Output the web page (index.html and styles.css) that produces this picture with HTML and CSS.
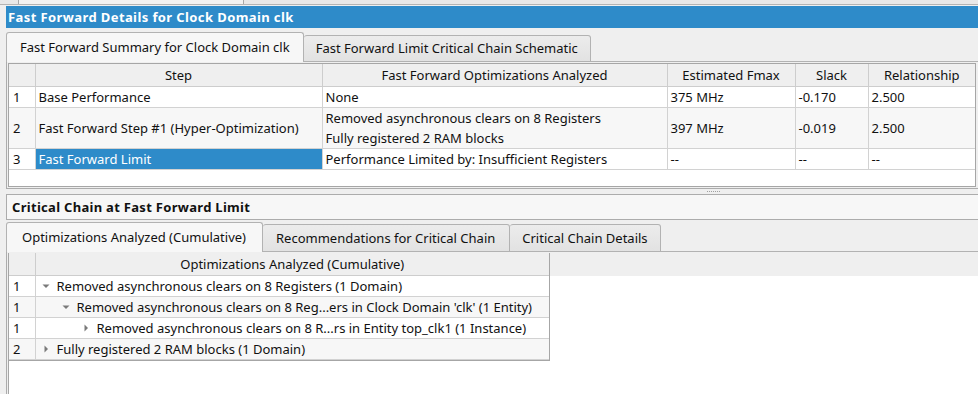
FILE: index.html
```html
<!DOCTYPE html>
<html lang="en">
<head>
    <meta charset="UTF-8">
    <title>Fast Forward Details</title>
    <link rel="stylesheet" href="styles.css">
</head>
<body>
<div class="top-strip"><div class="top-box"></div></div>

<div class="panel">
    <div class="title-bar">Fast Forward Details for Clock Domain clk</div>
    <div class="tabs tabs-first">
        <div class="tab active">Fast Forward Summary for Clock Domain clk</div>
        <div class="tab">Fast Forward Limit Critical Chain Schematic</div>
        <div class="tab-fill"></div>
    </div>
    <div class="pane">
        <div class="grid-frame summary">
            <table class="grid">
                <colgroup>
                    <col style="width:26px">
                    <col style="width:287px">
                    <col style="width:345px">
                    <col style="width:128px">
                    <col style="width:73px">
                    <col>
                </colgroup>
                <thead>
                <tr>
                    <th></th>
                    <th>Step</th>
                    <th>Fast Forward Optimizations Analyzed</th>
                    <th>Estimated Fmax</th>
                    <th>Slack</th>
                    <th>Relationship</th>
                </tr>
                </thead>
                <tbody>
                <tr>
                    <td class="num">1</td>
                    <td>Base Performance</td>
                    <td>None</td>
                    <td>375 MHz</td>
                    <td>-0.170</td>
                    <td>2.500</td>
                </tr>
                <tr class="alt tall">
                    <td class="num">2</td>
                    <td>Fast Forward Step #1 (Hyper-Optimization)</td>
                    <td>Removed asynchronous clears on 8 Registers<br>Fully registered 2 RAM blocks</td>
                    <td>397 MHz</td>
                    <td>-0.019</td>
                    <td>2.500</td>
                </tr>
                <tr>
                    <td class="num">3</td>
                    <td class="selected">Fast Forward Limit</td>
                    <td>Performance Limited by: Insufficient Registers</td>
                    <td>--</td>
                    <td>--</td>
                    <td>--</td>
                </tr>
                </tbody>
            </table>
        </div>
    </div>
</div>

<div class="splitter"><span class="grip"></span></div>

<div class="panel lower">
    <div class="title-bar plain">Critical Chain at Fast Forward Limit</div>
    <div class="tabs tabs-second">
        <div class="tab active wide">Optimizations Analyzed (Cumulative)</div>
        <div class="tab mid">Recommendations for Critical Chain</div>
        <div class="tab">Critical Chain Details</div>
        <div class="tab-fill"></div>
    </div>
    <div class="pane grow">
        <div class="tree-head-band">
            <div class="grid-frame tree">
                <table class="grid">
                    <colgroup>
                        <col style="width:26px">
                        <col>
                    </colgroup>
                    <thead>
                    <tr>
                        <th></th>
                        <th>Optimizations Analyzed (Cumulative)</th>
                    </tr>
                    </thead>
                    <tbody>
                    <tr>
                        <td class="num">1</td>
                        <td><div class="node lvl1"><svg class="arrow" viewBox="0 0 8 8"><polygon points="0.5,2.5 7.5,2.5 4,6"/></svg>Removed asynchronous clears on 8 Registers (1 Domain)</div></td>
                    </tr>
                    <tr class="alt">
                        <td class="num">1</td>
                        <td><div class="node lvl2"><svg class="arrow" viewBox="0 0 8 8"><polygon points="0.5,2.5 7.5,2.5 4,6"/></svg>Removed asynchronous clears on 8 Reg...ers in Clock Domain 'clk' (1 Entity)</div></td>
                    </tr>
                    <tr>
                        <td class="num">1</td>
                        <td><div class="node lvl3"><svg class="arrow" viewBox="0 0 8 8"><polygon points="2.5,0.5 6,4 2.5,7.5"/></svg>Removed asynchronous clears on 8 R...rs in Entity top_clk1 (1 Instance)</div></td>
                    </tr>
                    <tr class="alt">
                        <td class="num">2</td>
                        <td><div class="node lvl1"><svg class="arrow" viewBox="0 0 8 8"><polygon points="2.5,0.5 6,4 2.5,7.5"/></svg>Fully registered 2 RAM blocks (1 Domain)</div></td>
                    </tr>
                    </tbody>
                </table>
            </div>
        </div>
    </div>
</div>
</body>
</html>
```

FILE: styles.css
```css
html,
body {
    margin: 0;
    padding: 0;
    height: 100%;
    overflow: hidden;
}

body {
    background: #efefef;
    font: 13px "Noto Sans", "DejaVu Sans", sans-serif;
    color: #111111;
    display: flex;
    flex-direction: column;
}

.top-strip {
    height: 4px;
    border-bottom: 1px solid #b4b4b4;
    background: #e8e8e8;
    padding-left: 18px;
}
.top-box {
    width: 224px;
    height: 4px;
    border-left: 1px solid #a8a8a8;
    border-right: 1px solid #a8a8a8;
    background: #f2f2f2;
}

.panel {
    margin-left: 6px;
    margin-top: 1px;
    display: flex;
    flex-direction: column;
}
.panel.lower {
    margin-top: 0;
    flex: 1;
}

.title-bar {
    height: 22px;
    line-height: 22px;
    background: #2e8bc9;
    color: #ffffff;
    font-weight: 700;
    letter-spacing: 0.4px;
    padding-left: 2px;
    white-space: nowrap;
}
.title-bar.plain {
    height: 24px;
    line-height: 24px;
    background: #f7f7f7;
    color: #111111;
    border: 1px solid #acacac;
    border-right: none;
    letter-spacing: 0.3px;
    padding-left: 5px;
}

/* tab bars */
.tabs {
    display: flex;
    align-items: flex-end;
}
.tabs-first {
    height: 34px;
}
.tabs-second {
    height: 32px;
}
.tab {
    box-sizing: border-box;
    height: 27px;
    line-height: 25px;
    padding: 0 12px;
    background: linear-gradient(#ececec, #e2e2e2);
    border: 1px solid #b2b2b2;
    border-left: none;
    border-radius: 3px 3px 0 0;
    white-space: nowrap;
}
.tabs-second .tab {
    height: 28px;
    line-height: 26px;
}
.tab.active {
    height: 30px;
    line-height: 28px;
    background: #f7f7f7;
    border-left: 1px solid #b2b2b2;
    border-bottom: none;
    padding: 0 13px;
}
.tabs-second .tab.active {
    height: 30px;
}
.tab.wide {
    padding: 0 16px 0 15px;
}
.tab.mid {
    padding: 0 14px 0 13px;
}
.tab-fill {
    flex: 1;
    border-bottom: 1px solid #b2b2b2;
}

/* tab page */
.pane {
    border-left: 1px solid #acacac;
    border-bottom: 1px solid #acacac;
    padding: 1px 2px 1px 1px;
}
.pane.grow {
    flex: 1;
    border-bottom: none;
    padding: 1px 0 0 1px;
}

.grid-frame {
    background: #ffffff;
    border: 1px solid #a6a6a6;
}
.grid-frame.summary {
    height: 122px;
}

.tree-head-band {
    height: 100%;
    background: linear-gradient(#efefef 0, #efefef 23px, #ffffff 23px);
    border-left: 1px solid #a6a6a6;
}
.grid-frame.tree {
    width: 540px;
    border-left: none;
    border-top: none;
}

.grid {
    width: 100%;
    border-collapse: collapse;
    table-layout: fixed;
}
.grid th {
    height: 22px;
    padding: 0;
    background: #efefef;
    font-weight: 400;
    text-align: center;
    border-right: 1px solid #cdcdcd;
    border-bottom: 1px solid #cdcdcd;
    white-space: nowrap;
}
.grid th:last-child {
    border-right: none;
}
.grid td {
    height: 20px;
    padding: 0 3px;
    border-right: 1px solid #d2d2d2;
    border-bottom: 1px solid #d2d2d2;
    white-space: nowrap;
    line-height: 20px;
}
.grid td.num {
    padding-left: 4px;
}
.grid td:last-child {
    border-right: none;
}
.grid .tall td {
    height: 39px;
}
.grid .alt td {
    background: #f7f7f7;
}
.grid td.selected {
    background: #2e8bc9;
    color: #ffffff;
}

.node {
    display: flex;
    align-items: center;
    height: 20px;
}
.node.lvl1 { padding-left: 3px; }
.node.lvl2 { padding-left: 23px; }
.node.lvl3 { padding-left: 43px; }
.arrow {
    flex: none;
    width: 8px;
    height: 8px;
    fill: #7a7a7a;
    margin-right: 7px;
}

.splitter {
    height: 5px;
    display: flex;
    justify-content: center;
    padding-left: 450px;
}
.grip {
    margin-top: 2px;
    width: 14px;
    height: 1px;
    background: repeating-linear-gradient(90deg, #a0a0a0 0, #a0a0a0 1px, transparent 1px, transparent 2px);
}
```
